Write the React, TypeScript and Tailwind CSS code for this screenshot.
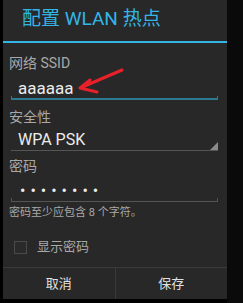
import React from "react";

const font = { fontFamily: 'Roboto, "Noto Sans CJK SC", sans-serif' };

function Underline({ color, thick }: { color: string; thick?: boolean }) {
  return (
    <div
      className={`h-[4px] border-x border-b ${thick ? "border-b-2" : ""}`}
      style={{ borderColor: color }}
    />
  );
}

export default function App() {
  return (
    <div
      className="w-[243px] h-[303px] bg-black flex overflow-hidden"
      style={font}
    >
      <div className="w-[3px] bg-black" />
      <div className="w-[224px] h-[299px] bg-[#282828] flex flex-col">
        <div className="h-[41px] pl-[19px] pt-[6px] text-[19px] leading-[25px] text-[#33b5e5]">
          配置 WLAN 热点
        </div>
        <div className="h-[2px] bg-[#33b5e5]" />

        <div className="px-[6px]">
          <div className="mt-[12px] text-[14px] leading-[17px] text-[#a8a8a8]">网络 SSID</div>
          <div className="relative mt-[6px] ml-[2px] mr-[3px]">
            <div className="pl-[7px] text-[17px] leading-[21px] text-[#ececec]">aaaaaa</div>
            <div className="-mt-[3px]">
              <Underline color="#2c7a92" thick />
            </div>
            <svg
              className="absolute left-[60px] top-[-14px]"
              width="60"
              height="34"
              viewBox="0 0 60 34"
            >
              <path
                d="M9 24 L51 6 M9 24 L19 16 M9 24 L26 28"
                stroke="#e8202a"
                strokeWidth="3"
                strokeLinecap="round"
                strokeLinejoin="round"
                fill="none"
              />
            </svg>
          </div>

          <div className="mt-[9px] text-[14px] leading-[17px] text-[#a8a8a8]">安全性</div>
          <div className="mt-[4px] ml-[2px] mr-[3px] flex items-end justify-between border-b border-[#555]">
            <div className="pl-[7px] text-[16px] leading-[20px] text-[#ececec]">WPA PSK</div>
            <svg width="8" height="8" viewBox="0 0 8 8" className="block">
              <polygon points="8,0 8,8 0,8" fill="#8a8a8a" />
            </svg>
          </div>

          <div className="mt-[7px] text-[14px] leading-[17px] text-[#a8a8a8]">密码</div>
          <div className="mt-[6px] ml-[2px] mr-[3px]">
            <div className="pl-[9px] text-[16px] leading-[20px] tracking-[5px] text-[#ececec]">
              ••••••••
            </div>
            <div className="-mt-[3px]">
              <Underline color="#555" />
            </div>
          </div>

          <div className="mt-[4px] text-[11px] leading-[14px] text-[#a8a8a8]">
            密码至少应包含 8 个字符。
          </div>

          <div className="mt-[19px] flex items-center pl-[5px] gap-[10px]">
            <div className="w-[13px] h-[13px] border border-[#4a4a4a] bg-[#2a2a2a]" />
            <div className="text-[13px] leading-[16px] text-[#a8a8a8]">显示密码</div>
          </div>
        </div>

        <div className="mt-auto h-[32px] border-t border-[#3a3a3a] flex">
          <div className="flex-1 flex items-center justify-center text-[13px] text-[#e0e0e0] border-r border-[#3a3a3a]">
            取消
          </div>
          <div className="flex-1 flex items-center justify-center text-[13px] text-[#e0e0e0]">
            保存
          </div>
        </div>
      </div>
      <div className="flex-1 bg-[#0a0a0a]" />
    </div>
  );
}
